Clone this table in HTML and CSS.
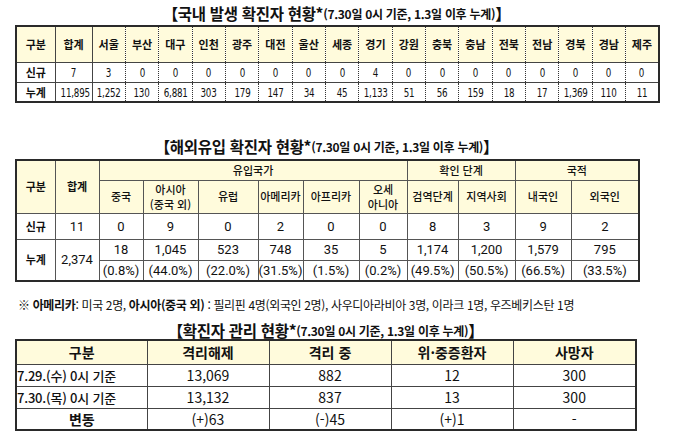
FILE: index.html
```html
<!DOCTYPE html>
<html lang="ko">
<head>
<meta charset="utf-8">
<link rel="stylesheet" href="styles.css">
</head>
<body>
<div class="page">
  <div class="title t1"><span class="big">【국내 발생 확진자 현황*</span><span class="small">(7.30일 0시 기준, 1.3일 이후 누계)</span><span class="big">】</span></div>
  <table class="tb1">
    <colgroup>
      <col class="c39"><col class="c37">
      <col span="17" class="c33">
    </colgroup>
    <tr class="h">
      <th class="s">구분</th><th class="s">합계</th><th>서울</th><th>부산</th><th>대구</th><th>인천</th><th>광주</th><th>대전</th><th>울산</th><th>세종</th><th>경기</th><th>강원</th><th>충북</th><th>충남</th><th>전북</th><th>전남</th><th>경북</th><th>경남</th><th>제주</th>
    </tr>
    <tr class="r">
      <th class="s">신규</th><td class="s"><span class="n">7</span></td><td><span class="n">3</span></td><td><span class="n">0</span></td><td><span class="n">0</span></td><td><span class="n">0</span></td><td><span class="n">0</span></td><td><span class="n">0</span></td><td><span class="n">0</span></td><td><span class="n">0</span></td><td><span class="n">4</span></td><td><span class="n">0</span></td><td><span class="n">0</span></td><td><span class="n">0</span></td><td><span class="n">0</span></td><td><span class="n">0</span></td><td><span class="n">0</span></td><td><span class="n">0</span></td><td><span class="n">0</span></td>
    </tr>
    <tr class="r">
      <th class="s">누계</th><td class="s"><span class="n">11,895</span></td><td><span class="n">1,252</span></td><td><span class="n">130</span></td><td><span class="n">6,881</span></td><td><span class="n">303</span></td><td><span class="n">179</span></td><td><span class="n">147</span></td><td><span class="n">34</span></td><td><span class="n">45</span></td><td><span class="n">1,133</span></td><td><span class="n">51</span></td><td><span class="n">56</span></td><td><span class="n">159</span></td><td><span class="n">18</span></td><td><span class="n">17</span></td><td><span class="n">1,369</span></td><td><span class="n">110</span></td><td><span class="n">11</span></td>
    </tr>
  </table>

  <div class="title t2"><span class="big">【해외유입 확진자 현황*</span><span class="small">(7.30일 0시 기준, 1.3일 이후 누계)</span><span class="big">】</span></div>
  <table class="tb2">
    <colgroup>
      <col class="w39"><col class="w44"><col class="w44"><col class="w55"><col class="w60"><col class="w45"><col class="w56"><col class="w48"><col class="w51"><col class="w57"><col class="w56"><col class="w68">
    </colgroup>
    <tr class="h1">
      <th rowspan="2" class="bh">구분</th><th rowspan="2" class="bh">합계</th><th colspan="6">유입국가</th><th colspan="2">확인 단계</th><th colspan="2">국적</th>
    </tr>
    <tr class="h2">
      <th>중국</th><th><span class="l2">아시아</span><span class="l2">(중국 외)</span></th><th>유럽</th><th>아메리카</th><th>아프리카</th><th><span class="l2">오세</span><span class="l2">아니아</span></th><th>검역단계</th><th>지역사회</th><th>내국인</th><th>외국인</th>
    </tr>
    <tr class="r1">
      <th class="bh">신규</th><td>11</td><td>0</td><td>9</td><td>0</td><td>2</td><td>0</td><td>0</td><td>8</td><td>3</td><td>9</td><td>2</td>
    </tr>
    <tr class="r2">
      <th rowspan="2" class="bh">누계</th><td rowspan="2">2,374</td><td>18</td><td>1,045</td><td>523</td><td>748</td><td>35</td><td>5</td><td>1,174</td><td>1,200</td><td>1,579</td><td>795</td>
    </tr>
    <tr class="r2">
      <td>(0.8%)</td><td>(44.0%)</td><td>(22.0%)</td><td>(31.5%)</td><td>(1.5%)</td><td>(0.2%)</td><td>(49.5%)</td><td>(50.5%)</td><td>(66.5%)</td><td>(33.5%)</td>
    </tr>
  </table>

  <p class="note">※ <b>아메리카</b>: 미국 2명, <b>아시아(중국 외)</b> : 필리핀 4명(외국인 2명), 사우디아라비아 3명, 이라크 1명, 우즈베키스탄 1명</p>

  <div class="title t3"><span class="big">【확진자 관리 현황*</span><span class="small">(7.30일 0시 기준, 1.3일 이후 누계)</span><span class="big">】</span></div>
  <table class="tb3">
    <colgroup>
      <col class="w131"><col class="w122"><col class="w122"><col class="w122"><col class="w123">
    </colgroup>
    <tr class="h">
      <th>구분</th><th>격리해제</th><th>격리 중</th><th>위·중증환자</th><th>사망자</th>
    </tr>
    <tr>
      <td class="lbl">7.29.(수) 0시 기준</td><td>13,069</td><td>882</td><td>12</td><td>300</td>
    </tr>
    <tr>
      <td class="lbl">7.30.(목) 0시 기준</td><td>13,132</td><td>837</td><td>13</td><td>300</td>
    </tr>
    <tr>
      <td class="lbl c">변동</td><td>(+)63</td><td>(-)45</td><td>(+)1</td><td>-</td>
    </tr>
  </table>
</div>
</body>
</html>
```

FILE: styles.css
```css
* { box-sizing: border-box; }
html, body {
  margin: 0;
  padding: 0;
  background: #ffffff;
}
body {
  font-family: "Noto Sans CJK KR", "Noto Sans", sans-serif;
  color: #111;
  width: 680px;
  height: 433px;
  overflow: hidden;
}
.page {
  display: flex;
  flex-direction: column;
  align-items: flex-start;
  padding-left: 15px;
}
.title {
  display: flex;
  align-items: flex-end;
  justify-content: center;
  font-weight: 700;
  white-space: nowrap;
  letter-spacing: -0.3px;
}
.title .big { font-size: 15.5px; line-height: 18px; }
.title .small { font-size: 12px; line-height: 16px; letter-spacing: -0.3px; }

.t1 { width: 643px; height: 25px; padding-bottom: 3px; }
.t2 { width: 623px; height: 29px; margin-top: 27px; padding-bottom: 4px; }
.t3 { width: 621px; height: 25px; padding-bottom: 0; }

table {
  border-collapse: collapse;
  table-layout: fixed;
}
th, td {
  padding: 0;
  text-align: center;
  vertical-align: middle;
  white-space: nowrap;
  overflow: hidden;
}

/* column widths */
.c39, .w39 { width: 39px; }
.c37 { width: 37px; }
.c33 { width: 33.35px; }
.w44 { width: 44px; }
.w45 { width: 45px; }
.w48 { width: 48px; }
.w51 { width: 51px; }
.w55 { width: 55px; }
.w56 { width: 56px; }
.w57 { width: 57px; }
.w60 { width: 60px; }
.w68 { width: 68px; }
.w122 { width: 122px; }
.w123 { width: 123px; }
.w131 { width: 131px; }

/* table 1 */
.tb1 {
  width: 643px;
  border: 2px solid #2a2a2a;
}
.tb1 th, .tb1 td {
  border-top: 1px solid #444;
  border-bottom: 1px solid #444;
  border-left: 1px dotted #333;
  border-right: 1px dotted #333;
  font-size: 11px;
}
.tb1 .s { border-right: 1px solid #444; }
.tb1 th { font-weight: 700; }
.tb1 .h th { background: #fffbdc; height: 36px; }
.tb1 .r th, .tb1 .r td { height: 20px; }
.tb1 .n {
  display: inline-block;
  font-family: "DejaVu Sans", sans-serif;
  font-size: 11.5px;
  transform: scaleX(0.76);
  letter-spacing: -0.3px;
}

/* table 2 */
.tb2 {
  width: 623px;
  border: 2px solid #2a2a2a;
}
.tb2 th, .tb2 td {
  border: 1px solid #555;
  font-size: 11px;
}
.tb2 th { font-weight: 500; background: #fffbdc; line-height: 15px; }
.tb2 .l2 { display: block; line-height: 15px; }
.tb2 .bh { font-weight: 700; }
.tb2 .h1 th { height: 20px; }
.tb2 .h2 th { height: 33px; }
.tb2 td {
  font-family: Roboto, "Noto Sans", sans-serif;
  font-size: 13px;
}
.tb2 .r1 th, .tb2 .r1 td { height: 26px; }
.tb2 .r1 th, .tb2 .r2 th { background: #fff; }
.tb2 .r2 td { height: 21px; }

.note {
  margin: 14px 0 0 3px;
  height: 18px;
  font-size: 12px;
  line-height: 18px;
  letter-spacing: -0.35px;
  white-space: nowrap;
}
.note b { font-weight: 700; }

/* table 3 */
.tb3 {
  width: 621px;
  border: 2px solid #2a2a2a;
}
.tb3 th, .tb3 td {
  border: 1px solid #444;
  font-size: 14px;
  height: 22px;
}
.tb3 .h th {
  background: #fffbdc;
  font-weight: 700;
  height: 24px;
}
.tb3 td { font-weight: 400; }
.tb3 .lbl {
  text-align: left;
  font-weight: 500;
  font-size: 13px;
  letter-spacing: -0.2px;
}
.tb3 .lbl.c { text-align: center; font-weight: 700; font-size: 14px; }
```
